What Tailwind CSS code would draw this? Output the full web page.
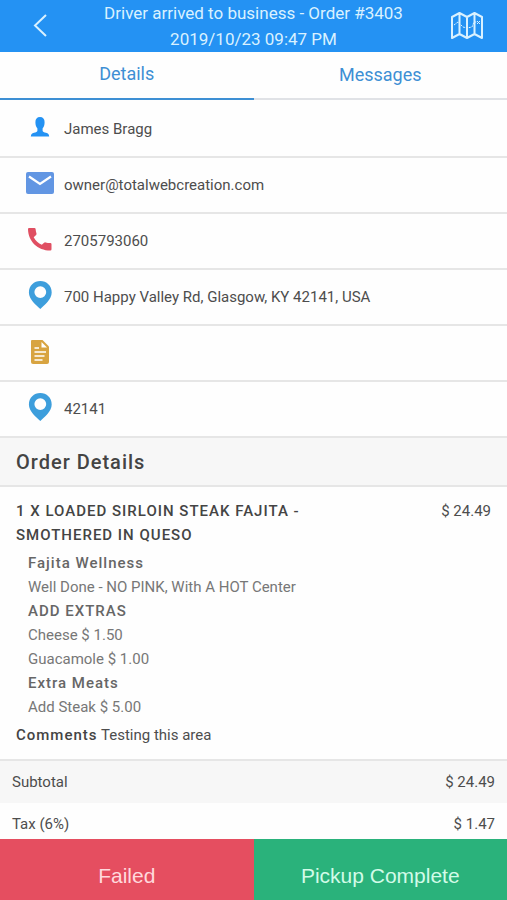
<!DOCTYPE html>
<html lang="en">
<head>
<meta charset="utf-8">
<meta name="viewport" content="width=device-width, initial-scale=1">
<title>Order #3403</title>
<script src="https://cdn.jsdelivr.net/npm/@tailwindcss/browser@4"></script>
</head>
<body class="flex h-screen flex-col overflow-hidden bg-[#fefefe] font-['Roboto',sans-serif] text-[15px] text-[#4d4d4d]">
<header class="flex shrink-0 items-center justify-between bg-[#2492f3] px-6 text-[#d9f1ff]">
  <button type="button" aria-label="Back" class="flex w-8 justify-center">
    <svg class="h-6 w-4" viewBox="0 0 16 24" fill="none" stroke="currentColor" stroke-width="2"><path d="M14 1 3 11.500 14 22"/></svg>
  </button>
  <h1 class="text-center text-[17px] leading-[26px]">Driver arrived to business - Order #3403<br>2019/10/23 09:47 PM</h1>
  <button type="button" aria-label="Map" class="flex w-8 justify-center">
    <svg class="h-7 w-8" viewBox="0 0 32 28" fill="none" stroke="currentColor" stroke-width="2" stroke-linejoin="round"><path d="M1 5 8.500 1 16 5l7.500-4L31 5v21l-7.500-4-7.500 4-7.500-4L1 26zM8.500 1v21M16 5v21M23.500 1v21"/><path stroke-width="1" stroke-dasharray="2 1" d="m3 13 4-3 5 5 4 1 5-1 2-5h3"/><path stroke-width="1" d="m26 9 3 3m-3 0 3-3"/></svg>
  </button>
</header>
<nav class="grid shrink-0 grid-cols-2 text-center text-lg leading-6 text-[#3d8fd4]">
  <a href="#details" aria-current="page" class="border-b-2 border-[#3d8fd4] pt-[10px] pb-3">Details</a>
  <a href="#messages" class="border-b-2 border-[#e0e2e6] pt-[11px] pb-[11px]">Messages</a>
</nav>
<main id="details" class="min-h-0 flex-1 overflow-hidden">
  <ul class="pt-0.5">
    <li class="flex h-14 items-center gap-[10px] border-b-2 border-[#e6e6e6] pl-[26px]">
      <svg class="mb-1 h-7 w-7 text-[#2492f3]" viewBox="0 0 28 28" fill="currentColor"><path d="M14 4c3 0 4.700 2 4.600 5.200 0 2.800-.8 4.800-2 6.300v2.300c.2 1.200 1.500 1.600 3.400 2 2.200.6 3 1.400 3.200 3.700H4.800c.2-2.300 1-3.100 3.200-3.700 1.900-.4 3.200-.8 3.400-2v-2.300c-1.200-1.500-2-3.500-2-6.300C9.300 6 11 4 14 4z"/></svg>
      <span>James Bragg</span>
    </li>
    <li class="flex h-14 items-center gap-[10px] border-b-2 border-[#e6e6e6] pl-[26px]">
      <svg class="mb-1 h-7 w-7" viewBox="0 0 28 28"><rect y="3" width="28" height="22" rx="2" fill="#6296e3"/><path d="m3 7.500 11 7.500 11-7.500" fill="none" stroke="#fff" stroke-width="2.200"/></svg>
      <span>owner@totalwebcreation.com</span>
    </li>
    <li class="flex h-14 items-center gap-[10px] border-b-2 border-[#e6e6e6] pl-[26px]">
      <svg class="mb-1 h-7 w-7 text-[#e04f62]" viewBox="0 0 28 28" fill="currentColor"><path d="M3 3h5.500q1 0 1.100 1c.1 1.800.5 3.200.9 4.600q.2.800-.4 1.400l-2.400 2.300c1.900 3.500 4.600 6.200 8.100 7.500l2.300-2q.7-.7 1.500-.4c1.500.5 2.900.6 4.700.7q1.200.1 1.200 1.100v5q0 1.300-1.200 1.300C11.500 25.500 2.300 16.300 2 4.200Q2 3 3 3z"/></svg>
      <span>2705793060</span>
    </li>
    <li class="flex h-14 items-center gap-[10px] border-b-2 border-[#e6e6e6] pl-[26px]">
      <svg class="mb-1 h-7 w-7 text-[#3d9edc]" viewBox="0 0 28 28" fill="currentColor"><path fill-rule="evenodd" d="M14.300 0c6.300 0 11.400 4.700 11.400 11.400 0 7-7.400 12.500-11.400 16.600C10.300 23.900 2.900 18.400 2.900 11.400 2.900 4.700 8 0 14.300 0zm0 5.200a5.900 5.900 0 1 0 0 11.800 5.900 5.900 0 0 0 0-11.800z"/></svg>
      <span>700 Happy Valley Rd, Glasgow, KY 42141, USA</span>
    </li>
    <li class="flex h-14 items-center gap-[10px] border-b-2 border-[#e6e6e6] pl-[26px]">
      <svg class="mb-1 h-7 w-7" viewBox="0 0 28 28"><path fill="#d8a441" d="M6 3h10.500L23 9.500V25q0 2-2 2H7q-2 0-2-2V4q0-1 1-1z"/><path fill="none" stroke="#fff" stroke-width="1.400" d="M8.500 11H13M8.500 15h11.500M8.500 19h10M8.500 23h8"/><path fill="#fff" d="M15.500 5v5.500H21z"/></svg>
    </li>
    <li class="flex h-14 items-center gap-[10px] border-b-2 border-[#e6e6e6] pl-[26px]">
      <svg class="mb-1 h-7 w-7 text-[#3d9edc]" viewBox="0 0 28 28" fill="currentColor"><path fill-rule="evenodd" d="M14.300 0c6.300 0 11.400 4.700 11.400 11.400 0 7-7.400 12.500-11.400 16.600C10.300 23.900 2.900 18.400 2.900 11.400 2.900 4.700 8 0 14.300 0zm0 5.200a5.900 5.900 0 1 0 0 11.800 5.900 5.900 0 0 0 0-11.800z"/></svg>
      <span>42141</span>
    </li>
  </ul>
  <h2 class="border-b-2 border-[#e6e6e6] bg-[#f7f7f7] px-4 pt-3 pb-[11px] text-xl leading-6 font-medium tracking-[1px] text-[#444]">Order Details</h2>
  <section class="border-b-2 border-[#e6e6e6] px-4 py-3 leading-6">
    <div class="flex justify-between gap-8">
      <h3 class="max-w-[320px] font-medium tracking-[1px] text-[#444]">1 X LOADED SIRLOIN STEAK FAJITA - SMOTHERED IN QUESO</h3>
      <span class="shrink-0">$ 24.49</span>
    </div>
    <dl class="my-1 pl-3 text-[#777]">
      <dt class="font-medium tracking-[1px] text-[#666]">Fajita Wellness</dt>
      <dd>Well Done - NO PINK, With A HOT Center</dd>
      <dt class="font-medium tracking-[1px] text-[#666]">ADD EXTRAS</dt>
      <dd>Cheese $ 1.50</dd>
      <dd>Guacamole $ 1.00</dd>
      <dt class="font-medium tracking-[1px] text-[#666]">Extra Meats</dt>
      <dd>Add Steak $ 5.00</dd>
    </dl>
    <p><strong class="font-medium tracking-[1px] text-[#444]">Comments</strong> Testing this area</p>
  </section>
  <table class="w-full leading-6">
    <tbody>
      <tr class="bg-[#f7f7f7]"><th scope="row" class="py-[9px] pl-3 text-left font-normal">Subtotal</th><td class="py-[9px] pr-3 text-right">$ 24.49</td></tr>
      <tr><th scope="row" class="py-[9px] pl-3 text-left font-normal">Tax (6%)</th><td class="py-[9px] pr-3 text-right">$ 1.47</td></tr>
    </tbody>
  </table>
</main>
<footer class="grid shrink-0 grid-cols-2 font-['Liberation_Sans',sans-serif] text-[21px] leading-8">
  <button type="button" class="bg-[#e54e60] pt-[21px] pb-2 text-[#ffd9dd]">Failed</button>
  <button type="button" class="bg-[#2ab27b] pt-[21px] pb-2 text-[#d2fbe8]">Pickup Complete</button>
</footer>
</body>
</html>
